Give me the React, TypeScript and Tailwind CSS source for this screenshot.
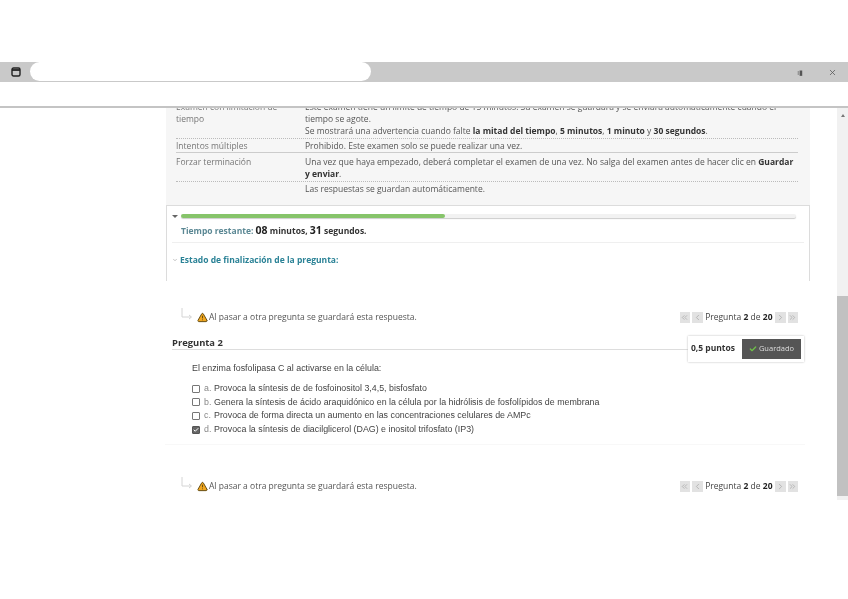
import { AlertTriangle, Check, ChevronLeft, ChevronRight, ChevronsLeft, ChevronsRight, ChevronDown, X } from 'lucide-react';

const OPTIONS = [
  { letter: 'a.', text: 'Provoca la síntesis de  de fosfoinositol 3,4,5, bisfosfato', checked: false },
  { letter: 'b.', text: 'Genera la síntesis de ácido araquidónico en la célula por la hidrólisis de fosfolípidos de membrana', checked: false },
  { letter: 'c.', text: 'Provoca de forma directa un aumento en las concentraciones celulares de AMPc', checked: false },
  { letter: 'd.', text: 'Provoca la síntesis de diacilglicerol (DAG) e inositol trifosfato (IP3)', checked: true },
];

function Pager() {
  const btn = 'w-[10.5px] h-[11px] bg-[#e2e2e2] flex items-center justify-center text-[#a8a8a8]';
  return (
    <div className="flex items-center gap-[2px] text-[8.5px] text-[#444]">
      <span className={btn}><ChevronsLeft className="w-[9px] h-[9px]" /></span>
      <span className={btn}><ChevronLeft className="w-[9px] h-[9px]" /></span>
      <span className="px-[0.5px] whitespace-nowrap">Pregunta <b className="text-[#222]">2</b> de <b className="text-[#222]">20</b></span>
      <span className={btn}><ChevronRight className="w-[9px] h-[9px]" /></span>
      <span className={btn}><ChevronsRight className="w-[9px] h-[9px]" /></span>
    </div>
  );
}

function SaveNotice() {
  return (
    <div className="flex items-center text-[8.5px] text-[#555]">
      <svg width="16" height="16" viewBox="0 0 16 16" className="mr-[1px] -mt-[5px]" fill="none" stroke="#d4d4d4" strokeWidth="1">
        <path d="M2 1v9h9M9 8l2.5 2L9 12" />
      </svg>
      <AlertTriangle className="w-[11px] h-[11px] mr-[1px] text-[#5a4510] fill-[#f0a61f]" />
      <span className="whitespace-nowrap">Al pasar a otra pregunta se guardará esta respuesta.</span>
    </div>
  );
}

export default function App() {
  return (
    <div className="relative w-[848px] h-[599px] bg-white overflow-hidden flex flex-col font-['Open_Sans','Liberation_Sans',sans-serif] blur-[0.5px]">
      <div className="h-[62px] shrink-0" />

      {/* browser chrome */}
      <div className="h-[20px] shrink-0 bg-[#c9c9c9] flex items-center justify-between pl-[11px] pr-[11px]">
        <svg width="10" height="10" viewBox="0 0 10 10" fill="none" stroke="#222" strokeWidth="1.4">
          <rect x="1" y="1" width="8" height="8" rx="1.5" />
          <path d="M1 3h8" strokeWidth="1.8" />
        </svg>
        <div className="flex items-center gap-[25px]">
          <span className="text-[7px] text-[#555] leading-none">ı▮</span>
          <X className="w-[9px] h-[9px] text-[#555]" />
        </div>
      </div>
      <div className="h-[26px] shrink-0 border-b-2 border-[#c4c4c4] bg-white" />

      {/* page body */}
      <div className="h-[392px] shrink-0 flex overflow-hidden">
        <div className="flex-1 min-w-0 pl-[166px] pr-[27px]">
          {/* quiz rules */}
          <div className="bg-[#f6f6f6] -mt-[7px] pl-[10px] pr-[12px] pb-[10px] text-[8.5px] leading-[12px] text-[#555]">
            <div className="flex border-b border-dotted border-[#bbb] pb-[1px]">
              <div className="w-[129px] shrink-0 text-[#777]">Examen con limitación de<br />tiempo</div>
              <div className="flex-1">
                Este examen tiene un límite de tiempo de 15 minutos. Su examen se guardará y se enviará automáticamente cuando el<br />
                tiempo se agote.<br />
                Se mostrará una advertencia cuando falte <b className="text-[#333]">la mitad del tiempo</b>, <b className="text-[#333]">5 minutos</b>, <b className="text-[#333]">1 minuto</b> y <b className="text-[#333]">30 segundos</b>.
              </div>
            </div>
            <div className="flex border-b border-[#ccc] pt-[1px]">
              <div className="w-[129px] shrink-0 text-[#777]">Intentos múltiples</div>
              <div className="flex-1">Prohibido. Este examen solo se puede realizar una vez.</div>
            </div>
            <div className="flex border-b border-dotted border-[#bbb] pt-[3px] pb-[1px]">
              <div className="w-[129px] shrink-0 text-[#777]">Forzar terminación</div>
              <div className="flex-1">Una vez que haya empezado, deberá completar el examen de una vez. No salga del examen antes de hacer clic en <b className="text-[#333]">Guardar y enviar</b>.</div>
            </div>
            <div className="flex pt-[1px]">
              <div className="w-[129px] shrink-0" />
              <div className="flex-1">Las respuestas se guardan automáticamente.</div>
            </div>
          </div>

          {/* timer block */}
          <div className="h-[76px] border border-b-0 border-[#dcdcdc] pl-[5px] pr-[5px] pt-[8px]">
            <div className="flex items-center gap-[3px] pr-[8px]">
              <span className="w-0 h-0 border-x-[3px] border-x-transparent border-t-[3px] border-t-[#666]" />
              <div className="flex-1 h-[4px] rounded-full bg-[#f2f2f2] shadow-[0_1px_1px_#ccc]">
                <div className="h-full rounded-full bg-[#86c46a]" style={{ width: `${(263 / 613) * 100}%` }} />
              </div>
            </div>
            <div className="pl-[9px] mt-[5px] pb-[4px] border-b border-[#efefef] text-[8.5px] font-bold text-[#5b8894] leading-[14px]">
              Tiempo restante: <span className="text-[10.5px] text-[#222]">08</span> <span className="text-[#333]">minutos,</span> <span className="text-[10.5px] text-[#222]">31</span> <span className="text-[#333]">segundos.</span>
            </div>
            <div className="flex items-center gap-[2px] mt-[11px] text-[8.5px] font-bold text-[#2a8296] leading-[12px]">
              <ChevronDown className="w-[6px] h-[6px] text-[#888]" />
              Estado de finalización de la pregunta:
            </div>
          </div>

          {/* question */}
          <div className="pl-[7px] w-[640px] -ml-[1px] h-[164px] pt-[30px] border-b border-[#f8f8f8]">
            <div className="flex items-center justify-between pl-[8px] pr-[7px]">
              <SaveNotice />
              <Pager />
            </div>
            <div className="flex items-end mt-[12px] pr-[1px]">
              <div className="flex-1 border-b border-[#ddd] text-[9.4px] font-bold text-[#333] leading-[13px]">Pregunta 2</div>
              <div className="-mb-[12px] flex items-center gap-[7px] pl-[3px] pr-[3px] py-[3px] bg-white shadow-[0_0_2px_#bbb] z-10">
                <span className="text-[8.5px] font-bold text-[#333] whitespace-nowrap">0,5 puntos</span>
                <span className="h-[20px] w-[59px] bg-[#555] flex items-center justify-center gap-[2px] text-[7.5px] text-[#ddd]">
                  <Check className="w-[8px] h-[8px] text-[#6fbf4a]" strokeWidth={4} />
                  Guardado
                </span>
              </div>
            </div>
            <div className="pl-[20px] mt-[12px] font-['Liberation_Sans',sans-serif] text-[#444] text-[8.85px]">
              <p className="leading-[12px] mb-[8px]">El enzima fosfolipasa C al activarse en la célula:</p>
              {OPTIONS.map((o) => (
                <div key={o.letter} className="flex items-center h-[13.7px] leading-[13px] whitespace-nowrap">
                  <span className={`w-[8px] h-[8px] rounded-[1px] border flex items-center justify-center mr-[4px] ${o.checked ? 'bg-[#666] border-[#555]' : 'bg-white border-[#777]'}`}>
                    {o.checked && <Check className="w-[6px] h-[6px] text-white" strokeWidth={4} />}
                  </span>
                  <span className="w-[10px] text-[#888]">{o.letter}</span>
                  {o.text}
                </div>
              ))}
            </div>
          </div>

          {/* bottom nav */}
          <div className="w-[640px] -ml-[1px] flex items-center justify-between pl-[15px] pr-[7px] mt-[35px]">
            <SaveNotice />
            <Pager />
          </div>
        </div>

        <div className="w-[11px] shrink-0 bg-[#f1f1f1] flex flex-col">
          <div className="h-[188px] flex justify-center pt-[6px]">
            <span className="w-0 h-0 border-x-[2px] border-x-transparent border-b-[3px] border-b-[#777]" />
          </div>
          <div className="h-[200px] bg-[#c1c1c1]" />
        </div>
      </div>

      {/* redaction over the address bar */}
      <div className="absolute left-[30px] top-[62px] w-[341px] h-[19px] rounded-full bg-white" />
      <div className="absolute left-[190px] top-[60px] w-[170px] h-[4px] bg-white" />
      <div className="absolute left-0 top-[83px] w-[296px] h-[23px] rounded-bl-[30px] bg-white" />
    </div>
  );
}
